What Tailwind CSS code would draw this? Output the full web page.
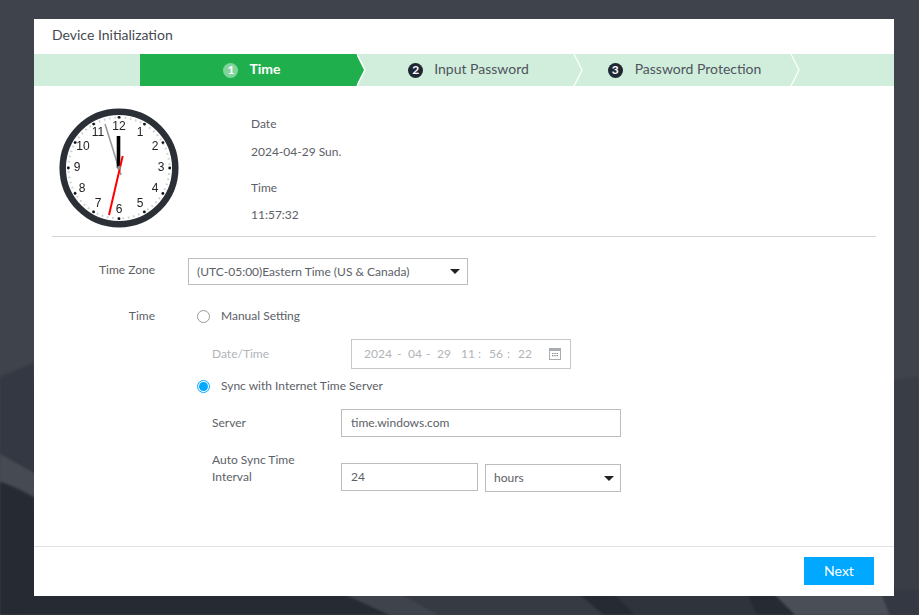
<!DOCTYPE html>
<html lang="en">
<head>
    <meta charset="UTF-8" />
    <meta name="viewport" content="width=device-width, initial-scale=1.0" />
    <title>Device Initialization</title>
    <script src="https://cdn.jsdelivr.net/npm/@tailwindcss/browser@4"></script>
</head>
<body class="relative h-[615px] w-[919px] overflow-hidden bg-[#3f434c] font-['Lato',sans-serif] text-[13px] text-[#5c6167]">

    <!-- Mountain backdrop -->
    <svg class="absolute inset-0 blur-[1px]" width="919" height="615" viewBox="0 0 919 615" fill="none">
        <path d="M-5 379 L34 363 L40 615 L-5 615 Z" fill="#343842"/>
        <path d="M-5 478 L34 498 L40 620 L-5 620 Z" fill="#252a33"/>
        <path d="M-5 451 L34 473 L40 500 L18 488 L-5 480 Z" fill="#464a53"/>
        <path d="M890 381 L924 376 L924 620 L890 620 Z" fill="#393d46"/>
        <path d="M20 590 L924 590 L924 620 L20 620 Z" fill="#262b33"/>
        <path d="M335 590 L395 590 L448 620 L400 620 Z" fill="#3f434c"/>
        <path d="M395 590 L574 590 L610 620 L448 620 Z" fill="#363a43"/>
        <path d="M610 590 L745 590 L760 620 L640 620 Z" fill="#2f333c"/>
        <path d="M770 590 L880 590 L892 620 L800 620 Z" fill="#4a4e56"/>
        <path d="M880 590 L924 590 L924 620 L892 620 Z" fill="#343842"/>
    </svg>

    <!-- Dialog -->
    <main class="absolute left-[34px] top-[19px] flex h-[577px] w-[860px] flex-col bg-white">
        <h1 class="flex h-[35px] items-center pb-[5px] pl-[18px] text-[14px] text-[#454a51]">Device Initialization</h1>

        <!-- Steps -->
        <ol class="flex h-[32px] bg-[#d1eedd] pl-[106px] text-[14px] text-[#4f545c]">
            <li class="relative flex w-[217px] items-center justify-center gap-[11px] bg-[#1fb04d] pl-[7px] font-bold text-white">
                <span class="flex h-[15px] w-[15px] items-center justify-center rounded-full bg-[#7fd49a] text-[12px] leading-none">1</span>
                <span class="pb-[3px]">Time</span>
                <svg class="absolute left-[216px] top-0" width="10" height="32" viewBox="0 0 10 32">
                    <path d="M0 0 L8 16 L0 32 Z" fill="#1fb04d"/>
                    <path d="M1 0 L9 16 L1 32" fill="none" stroke="#fff" stroke-width="1.2"/>
                </svg>
            </li>
            <li class="relative flex w-[217px] items-center justify-center gap-[11px] pl-[6px]">
                <span class="flex h-[15px] w-[15px] items-center justify-center rounded-full bg-[#1f2733] text-[12px] font-bold leading-none text-white">2</span>
                <span class="pb-[3px]">Input Password</span>
                <svg class="absolute left-[216px] top-0" width="10" height="32" viewBox="0 0 10 32">
                    <path d="M1 0 L9 16 L1 32" fill="none" stroke="#fff" stroke-width="1.2"/>
                </svg>
            </li>
            <li class="relative flex w-[217px] items-center justify-center gap-[12px] pl-[4px]">
                <span class="flex h-[15px] w-[15px] items-center justify-center rounded-full bg-[#1f2733] text-[12px] font-bold leading-none text-white">3</span>
                <span class="pb-[3px]">Password Protection</span>
                <svg class="absolute left-[216px] top-0" width="10" height="32" viewBox="0 0 10 32">
                    <path d="M1 0 L9 16 L1 32" fill="none" stroke="#fff" stroke-width="1.2"/>
                </svg>
            </li>
        </ol>

        <!-- Current time -->
        <section class="mx-[18px] flex h-[151px] border-b border-[#d4d4d4]">
            <svg id="clock" class="ml-[6px] mt-[21px] [will-change:transform]" width="122" height="122" viewBox="0 0 122 122">
                <circle cx="61" cy="61" r="56.3" fill="#fff" stroke="#2a3036" stroke-width="6.5"/>
                <circle cx="61" cy="61" r="50.5" fill="none" stroke="#cfcfcf" stroke-width="2.2" stroke-dasharray="1.6 3.69"/>
                <g fill="#111">
                    <circle cx="61" cy="10.3" r="1.4"/><circle cx="86.4" cy="17.1" r="1.4"/><circle cx="104.9" cy="35.6" r="1.4"/>
                    <circle cx="111.7" cy="61" r="1.4"/><circle cx="104.9" cy="86.4" r="1.4"/><circle cx="86.4" cy="104.9" r="1.4"/>
                    <circle cx="61" cy="111.7" r="1.4"/><circle cx="35.6" cy="104.9" r="1.4"/><circle cx="17.1" cy="86.4" r="1.4"/>
                    <circle cx="10.3" cy="61" r="1.4"/><circle cx="17.1" cy="35.6" r="1.4"/><circle cx="35.6" cy="17.1" r="1.4"/>
                </g>
                <g font-family="'Liberation Sans', sans-serif" font-size="12" fill="#222" text-anchor="middle">
                    <text x="61" y="23">12</text><text x="82" y="29">1</text><text x="97" y="43">2</text>
                    <text x="103" y="64">3</text><text x="97" y="85">4</text><text x="82" y="100">5</text>
                    <text x="61" y="106">6</text><text x="40" y="100">7</text><text x="24" y="85">8</text>
                    <text x="19" y="64">9</text><text x="25" y="43">10</text><text x="40" y="29">11</text>
                </g>
                <path d="M47 17 L63 68" stroke="#9a9a9a" stroke-width="1.6"/>
                <path d="M60.5 61 L60.5 29" stroke="#000" stroke-width="3.6"/>
                <path d="M64.7 49 L51 108" stroke="#f00" stroke-width="2"/>
                <circle cx="61" cy="60.7" r="2" fill="#8a8a8a"/>
            </svg>
            <dl class="ml-[71px] pt-[29px] text-[12px] leading-[18px]">
                <dt>Date</dt>
                <dd class="mt-[10px]">2024-04-29 Sun.</dd>
                <dt class="mt-[18px]">Time</dt>
                <dd class="mt-[9px]">11:57:32</dd>
            </dl>
        </section>

        <!-- Form -->
        <form class="flex flex-1 flex-col pt-[21px] text-[12px]">
            <div class="flex items-center">
                <label class="w-[121px] pb-[3px] text-right">Time Zone</label>
                <div class="ml-[33px] flex h-[27px] w-[280px] items-center justify-between border border-[#bcbcbc] pl-[8px] pr-[7px]">
                    <span>(UTC-05:00)Eastern Time (US &amp; Canada)</span>
                    <svg width="10" height="5" viewBox="0 0 10 5"><path d="M0 0 H10 L5 5 Z" fill="#222"/></svg>
                </div>
            </div>

            <div class="mt-[22px] flex h-[18px] items-center">
                <span class="w-[121px] text-right">Time</span>
                <span class="ml-[42px] h-[13px] w-[13px] rounded-full border border-[#9a9a9a]"></span>
                <span class="ml-[11px]">Manual Setting</span>
            </div>

            <div class="mt-[14px] flex h-[30px] items-center text-[#b0b4b9]">
                <span class="ml-[178px] w-[139px]">Date/Time</span>
                <div class="flex h-[30px] w-[220px] items-center border border-[#c8c8c8] pl-[12px]">
                    <span class="w-[33px]">2024</span><span class="w-[11px]">-</span>
                    <span class="w-[18px]">04</span><span class="w-[11px]">-</span>
                    <span class="w-[24px]">29</span>
                    <span class="w-[17px]">11</span><span class="w-[11px]">:</span>
                    <span class="w-[18px]">56</span><span class="w-[11px]">:</span>
                    <span class="w-[31px]">22</span>
                    <svg width="12" height="12" viewBox="0 0 12 12" fill="none">
                        <rect x="0.5" y="0.5" width="11" height="11" stroke="#a9adb2"/>
                        <rect x="0.5" y="0.5" width="11" height="2.5" fill="#a9adb2"/>
                        <path d="M3 5.5h1.4M5.3 5.5h1.4M7.6 5.5h1.4M3 7.7h1.4M5.3 7.7h1.4M7.6 7.7h1.4" stroke="#888" stroke-width="1.2"/>
                    </svg>
                </div>
            </div>

            <div class="mt-[8px] flex h-[18px] items-center">
                <span class="ml-[163px] flex h-[13px] w-[13px] items-center justify-center rounded-full border border-[#00a8ff]">
                    <span class="h-[9px] w-[9px] rounded-full bg-[#00a8ff]"></span>
                </span>
                <span class="ml-[11px]">Sync with Internet Time Server</span>
            </div>

            <div class="mt-[14px] flex items-center">
                <label class="ml-[178px] w-[129px]">Server</label>
                <div class="flex h-[28px] w-[280px] items-center border border-[#bcbcbc] pl-[9px]">time.windows.com</div>
            </div>

            <div class="mt-[12px] flex items-start">
                <label class="ml-[178px] mt-[2px] w-[129px] leading-[17px]">Auto Sync Time<br>Interval</label>
                <div class="mt-[14px] flex items-start">
                    <div class="flex h-[28px] w-[137px] items-center border border-[#bcbcbc] pl-[9px]">24</div>
                    <div class="ml-[7px] mt-[1px] flex h-[28px] w-[136px] items-center justify-between border border-[#bcbcbc] pl-[8px] pr-[6px]">
                        <span>hours</span>
                        <svg width="10" height="5" viewBox="0 0 10 5"><path d="M0 0 H10 L5 5 Z" fill="#222"/></svg>
                    </div>
                </div>
            </div>
        </form>

        <footer class="flex h-[50px] items-start justify-end border-t border-[#e3e3e3] pr-[20px] pt-[10px]">
            <button class="h-[28px] w-[70px] bg-[#00a8ff] pb-[2px] text-[14px] text-white">Next</button>
        </footer>
    </main>
</body>
</html>
